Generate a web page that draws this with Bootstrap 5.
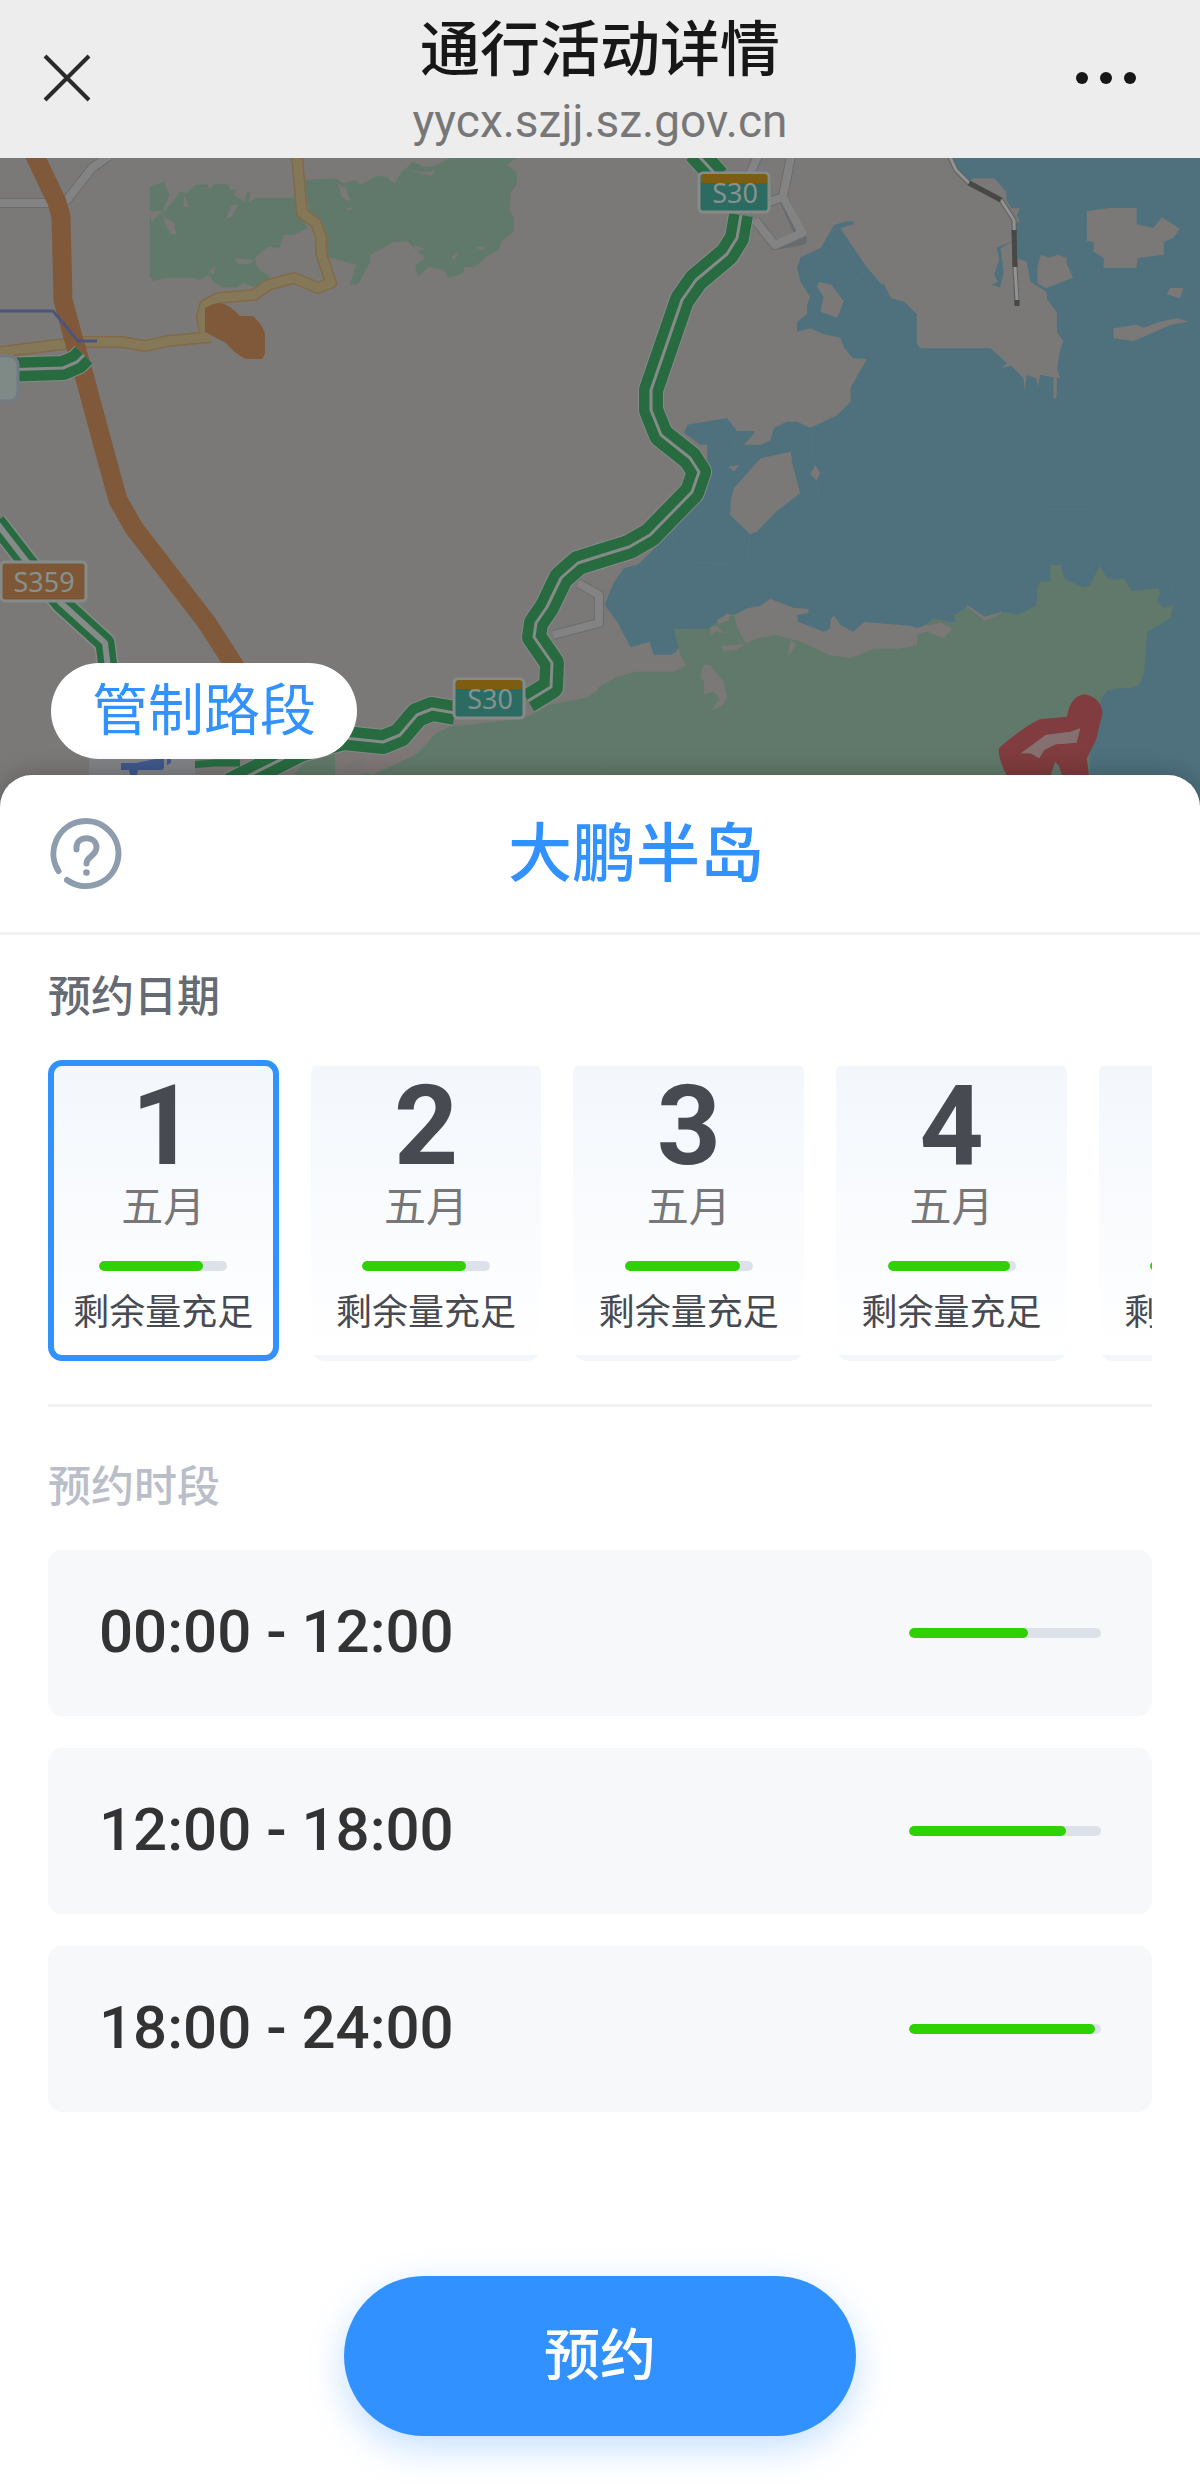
<!DOCTYPE html>
<html lang="zh-CN">
<head>
<meta charset="utf-8">
<meta name="viewport" content="width=device-width, initial-scale=1">
<title>通行活动详情</title>
<link href="https://cdn.jsdelivr.net/npm/bootstrap@5.3.0/dist/css/bootstrap.min.css" rel="stylesheet">
<style>
  :root { --brand: #3091ff; --track: #dde2ea; --fill: #2ed203; }
  body { font-family: "Noto Sans CJK SC", sans-serif; color: #333; background: #fff; }
  .topbar { background: #ededed; height: 158px; padding: 0 40px; }
  .topbar-btn { width: 56px; height: 56px; line-height: 1; }
  .topbar-title { font-size: 60px; line-height: 72px; font-weight: 500; color: #171717; }
  .topbar-url { font-family: Roboto, "Noto Sans CJK SC", sans-serif; font-size: 46px; line-height: 56px; margin-top: 12px; color: #777; }
  .map-area { height: 617px; background: #7b7977; }
  .map-area > svg { width: 100%; height: 650px; }
  .zone-tag { left: 51px; bottom: 16px; height: 96px; padding: 0 41px 10px; border-radius: 48px; font-size: 56px; line-height: 84px; color: var(--brand); }
  .sheet { border-radius: 32px 32px 0 0; box-shadow: 0 0 24px rgba(0,0,0,.25); }
  .sheet-head { height: 160px; padding: 0 50px; border-bottom: 3px solid #f2f2f2; }
  .sheet-title { font-size: 64px; line-height: 84px; padding-bottom: 12px; font-weight: 500; color: var(--brand); }
  .help-btn { width: 72px; height: 72px; }
  .sheet-body { padding: 28px 48px 48px; }
  .section-label { font-size: 43px; line-height: 60px; font-weight: 500; color: #666a73; margin-bottom: 37px; }
  .section-label.is-muted { color: #b9bec9; }
  .day-strip { gap: 32px; overflow-x: auto; scrollbar-width: none; }
  .day-strip::-webkit-scrollbar { display: none; }
  .day-card { flex: 0 0 20.9%; border: 6px solid transparent; border-radius: 14px; padding-bottom: 22px; background-image: linear-gradient(#f3f7fc, #fff); cursor: pointer; }
  .btn-check:checked + .day-card { border-color: var(--brand); }
  .day-num { font-family: Roboto, sans-serif; font-size: 112px; line-height: 120px; font-weight: 700; color: #484a52; }
  .day-month { font-size: 42px; line-height: 52px; margin-top: -8px; color: #777; }
  .day-note { font-size: 36px; line-height: 48px; color: #484a52; margin-top: 14px; }
  .quota { height: 10px; border-radius: 5px; background: var(--track); }
  .quota .progress-bar { border-radius: 5px; background: var(--fill); }
  .day-quota { width: 128px; margin-top: 31px; }
  .slot-quota { width: 192px; }
  .rule { height: 3px; background: #f2f2f2; margin: 43px 0 46px; }
  .slot-list { gap: 32px; }
  .slot { height: 166px; padding: 0 51px; border-radius: 14px; background: #f7f8fa; }
  .slot-time { font-family: Roboto, sans-serif; font-size: 60px; line-height: 80px; font-weight: 500; color: #333; padding-bottom: 2px; }
  .book-btn { width: 512px; max-width: 100%; height: 160px; border-radius: 80px; margin-top: 164px; padding-bottom: 16px; font-size: 56px; font-weight: 500; color: #fff; background: var(--brand); box-shadow: 0 12px 36px rgba(48,145,255,.28); }
  .book-btn:hover { color: #fff; background: #1f84f5; }
  .land { fill: #7b7977; } .sea { fill: #4e717d; } .wood { fill: #61796b; }
  .ln { fill: none; stroke-linejoin: round; }
  .plate { font-family: "Noto Sans", sans-serif; font-size: 27px; fill: #85928f; text-anchor: middle; }
</style>
</head>
<body>
<header class="topbar d-flex align-items-center justify-content-between">
  <button type="button" class="topbar-btn btn p-0 border-0" aria-label="关闭">
    <svg width="56" height="56" viewBox="0 0 56 56" fill="none" stroke="#2a2a2a" stroke-width="4"><path d="M5 5 49 49M49 5 5 49"/></svg>
  </button>
  <div class="text-center">
    <h1 class="topbar-title m-0">通行活动详情</h1>
    <div class="topbar-url">yycx.szjj.sz.gov.cn</div>
  </div>
  <button type="button" class="topbar-btn btn p-0 border-0" aria-label="更多">
    <svg class="overflow-visible" width="56" height="56" viewBox="0 0 56 56" fill="#171717"><circle cx="-22" cy="27" r="6"/><circle cx="2" cy="27" r="6"/><circle cx="26" cy="27" r="6"/></svg>
  </button>
</header>

<section class="map-area position-relative" aria-label="地图">
  <svg class="d-block" viewBox="0 158 1200 650" preserveAspectRatio="xMidYMin slice" role="img" aria-label="大鹏半岛地图">
    <rect class="land" y="158" width="1200" height="650"/>
    <!-- woods, north -->
    <g transform="translate(0 150) scale(.3827 .3333)">
      <path class="wood" d="M392 110 428 95 443 135 428 175 425 190 465 135 468 125 490 128 510 105 540 103 548 118 560 103 597 103 600 118 618 118 610 135 640 155 645 125 655 125 650 160 668 143 775 143 785 200 805 235 765 255 742 255 730 293 700 290 665 325 670 345 680 360 705 380 665 412 635 400 620 412 580 412 558 395 545 375 520 390 500 383 430 384 400 393 392 380ZM795 90 880 85 895 100 930 90 940 105 985 78 1010 80 1030 100 1050 65 1080 35 1110 50 1130 50 1175 24 1350 24 1325 45 1350 65V105L1335 125 1332 180 1342 200V245L1310 275 1305 297 1270 320 1240 352 1215 350 1210 370 1172 384 1160 360 1120 350 1092 382 1085 345 1110 325 1065 275H1030L1005 292 968 315V335L935 403H915L930 345 870 325 850 320V240L810 200Z"/>
      <path class="land" d="M425 197 455 220 460 255 445 250 430 215ZM605 165H622L605 200 590 208ZM392 184H425L395 215ZM480 130 494 172 480 170ZM883 100 905 115 915 155 895 145ZM903 175 928 172 912 182ZM1065 62 1110 66 1138 62 1125 78 1095 68ZM612 325 665 330 650 343 620 340ZM1180 320 1198 308 1185 333ZM1242 292 1265 288 1262 302ZM1080 285 1110 298 1090 303ZM545 365 562 348 558 375Z"/>
    </g>
    <!-- bay, upper part -->
    <g transform="translate(600 150) scale(.3827 .3333)">
      <path class="sea" d="M920 24H1570V965H280V884H262L220 848 228 824 332 804 358 843H402V852L376 884H420L445 872 455 833 488 815H515L549 833 618 797 655 755V712L698 627 662 625 638 595 628 563 585 553 549 535 515 545V515L541 493V465L549 442 524 395 515 355 524 322 577 293 612 225 640 215 662 213V223L628 235 696 350 735 403H742L760 445 795 455 828 493V583L838 595H1020L1064 640 1048 653 1075 647 1106 684 1110 720 1115 675 1140 685 1144 710 1150 675 1185 682V745H1193L1194 682 1202 685 1195 655 1202 600 1211 575 1194 545V487L1168 447 1166 425 1125 395 1115 335 1092 325 1085 220 1097 215 1090 195 1097 175H1075L1062 150V125L1030 85H975L965 95 930 50ZM1075 275 1037 292 1043 330 1030 375 1040 395 1023 405 1045 412 1055 370 1047 295Z"/>
      <path class="land" d="M572 395 605 405 637 453 620 503 576 485 584 442 568 412ZM1272 184 1330 174H1402V223L1446 234 1468 202 1515 236 1498 263 1473 275V314L1404 324 1402 354H1316V324L1290 305V275L1272 273ZM1152 314 1175 323 1195 314 1219 324 1220 343 1236 383 1166 415 1143 400V350ZM1490 414H1525L1515 445 1481 433ZM1342 535 1402 524 1420 533 1470 513 1510 505 1537 515 1490 525 1395 573 1342 565ZM498 905 508 965H392L420 925ZM335 945H365L350 965Z"/>
      <path class="ln" stroke="#58747c" stroke-width="2" d="M632 430 696 360M1228 340 1290 306M1410 335 1490 412M357 845 342 945M551 835 558 945"/>
    </g>
    <!-- bay, lower part, and the peninsula -->
    <g transform="translate(600 460) scale(.3827 .3333)">
      <path class="sea" d="M282 0H1570V1050H1200V600H300L208 570 185 584H140L130 545 80 562 45 485 12 435 35 370 62 325 100 313 130 280 185 215 215 180 265 110 280 60Z"/>
      <path class="land" d="M200 570 250 530 300 500 310 480 330 462 350 465 385 445 420 437 445 416 505 443 545 447V458L515 465 517 485 585 515 600 507 604 475 612 468 628 495 662 515 690 486 810 497 830 505 880 480 930 490 960 435 1005 470 1050 455V640H200ZM415 0H500L523 100 460 155 410 215 393 223 340 165 342 120 350 85ZM335 20 365 15 350 34ZM562 15 575 38 566 62 550 42Z"/>
      <path class="wood" d="M-5 683 40 653 90 635H192L225 615 210 585 193 507 285 506 310 480 350 465 358 500 380 550 410 535 460 525 520 543 600 585 655 594 715 566H780L828 556 830 522 855 515 897 534 921 507 890 488 850 497 870 474 928 490 925 467 960 440 1005 482 1060 455 1090 465 1140 437 1143 380 1150 365H1177V315H1204L1212 355 1262 383 1280 375 1306 318 1325 355 1350 360 1370 355 1388 394 1460 385 1463 400 1456 425 1475 443 1498 435 1490 475 1430 515 1422 638 1408 675 1388 685H1350L1325 693 1310 715 1280 850V1050H-5Z"/>
      <path class="land" d="M270 615H288L323 665 332 715 322 735 290 753 313 715 298 696 272 702 272 665 262 652ZM498 538 513 555 490 592ZM305 480 335 462 338 480 312 492ZM288 500 305 498 328 522 305 512 290 525ZM315 558 380 552 355 570 325 574Z"/>
      <path class="ln" stroke="#58747c" stroke-width="2" d="M187 225 205 270 240 305 335 312M392 223 387 300 430 415M568 65 574 145M975 153 1285 147 1380 238 1490 375 1499 410 1568 265"/>
      <path fill="#803c3e" fill-rule="evenodd" d="M1062 945Q1035 880 1044 862 1120 790 1150 778L1220 770Q1230 705 1268 703 1310 715 1313 760L1296 840 1272 895 1283 1000H1222L1200 920 1190 905 1160 1000H1080ZM1100 880 1165 825 1230 815 1255 805 1245 848 1190 853 1160 870 1148 895 1125 880Z"/>
      <path fill="#86706f" d="M1100 880 1165 825 1230 815 1255 805 1245 848 1190 853 1160 870 1148 895 1125 880Z"/>
    </g>
    <!-- woods, south-west -->
    <g transform="translate(0 460) scale(.3827 .3333)">
      <path class="wood" d="M1572 683 1535 712 1435 735 1370 775 1175 800 1140 820 1090 880 1000 930 720 1000H1572Z"/>
      <path class="wood" d="M800 900 875 880V1050H690Z"/>
      <path fill="#807876" d="M875 890 1085 870 1085 885 970 945 950 930 960 895 915 905 888 945ZM1085 850 1110 825 1160 805 1125 830 1115 852Z"/>
    </g>
    <!-- minor roads -->
    <g class="ln">
      <path stroke="#696c6e" stroke-width="10" d="M0 203H52L67 200 92 168 109 156M758 156 749 176M791 156 783 197 802 240 775 245 755 220M783 197 766 203M578 583 599 595V623L553 635"/>
      <path stroke="#838383" stroke-width="8" d="M0 203H52L67 200 92 168 109 156M758 156 749 176M791 156 783 197 802 233 775 245 755 220M783 197 766 203M578 583 599 595V623L553 635"/>
      <path stroke="#5d5f60" stroke-width="5" d="M950 157 956 170 969 183 1001 200 1014 220 1015 267 1017 305"/>
      <path stroke="#929292" stroke-width="3" d="M950 157 956 170 969 183 1001 200 1014 220 1015 267 1017 300"/>
      <path stroke="#484848" stroke-width="5" d="M969 183 1001 200M1014 230 1015 267M1017 300V306"/>
      <path stroke="#806a48" stroke-width="12" d="M297 156 302 213 316 223 321 237V253L331 283 318 288 294 278 268 285 254 295 218 298 205 305 202 317 205 333M211 337 168 341 145 346 122 342H80L0 352"/>
      <path stroke="#857859" stroke-width="9" d="M297 156 302 213 316 223 321 237V253L331 283 318 288 294 278 268 285 254 295 218 298 205 305 202 317 205 333M211 337 168 341 145 346 122 342H80L0 352"/>
    </g>
    <!-- provincial road -->
    <path class="ln" stroke="#80593a" stroke-width="19" d="M34 154 57 202 61 217 63 300 73 337 84 375 107 460 118 500 134 528 207 623 245 682"/>
    <path fill="#80593a" d="M205 308Q214 303 220 303 230 305 240 316H253Q264 326 265 335V354L262 359H246Q235 354 226 343L205 332Z"/>
    <path class="ln" stroke="#4b547c" stroke-width="3" d="M0 311H53L78 341H97"/>
    <!-- expressways -->
    <g class="ln">
      <path stroke="#858b88" stroke-width="26" d="M0 370 63 368 77 362 84 355M695 152 718 177M741 215 737 238 727 254 696 280 682 300 651 390V410L661 435 690 458 699 472 692 492 650 535 629 547 600 556 578 563 561 578 547 607 536 623 534 637 552 663 551 687 528 701M455 713 432 709 417 715 400 735 383 742 344 738 300 750 230 785"/>
      <path stroke="#286b40" stroke-width="24" d="M0 370 63 368 77 362 84 355M695 152 718 177M741 215 737 238 727 254 696 280 682 300 651 390V410L661 435 690 458 699 472 692 492 650 535 629 547 600 556 578 563 561 578 547 607 536 623 534 637 552 663 551 687 528 701M455 713 432 709 417 715 400 735 383 742 344 738 300 750 230 785"/>
      <path stroke="#858b88" stroke-width="3" d="M0 370 63 368 77 362 84 355M695 152 718 177M741 215 737 238 727 254 696 280 682 300 651 390V410L661 435 690 458 699 472 692 492 650 535 629 547 600 556 578 563 561 578 547 607 536 623 534 637 552 663 551 687 528 701M455 713 432 709 417 715 400 735 383 742 344 738 300 750 230 785"/>
      <path stroke="#286b40" stroke-width="7" d="M190 765 215 763 240 763"/>
      <path stroke="#858b88" stroke-width="22" d="M-4 522 27 562 61 603 105 643 108 668"/>
      <path stroke="#286b40" stroke-width="19" d="M-4 522 27 562 61 603 105 643 108 668"/>
      <path stroke="#858b88" stroke-width="6" d="M-4 522 27 562 61 603 105 643 108 668"/>
    </g>
    <!-- road number plates -->
    <g stroke="#858b88" stroke-width="3">
      <rect x="-20" y="356" width="38" height="45" rx="9" fill="#7f8a86" stroke="#707b84"/>
      <rect x="699" y="173" width="70" height="39" rx="4" fill="#2c6b61"/>
      <rect x="454" y="679" width="70" height="39" rx="4" fill="#2c6b61"/>
      <rect x="1" y="562" width="85" height="39" rx="4" fill="#7e5836"/>
    </g>
    <path fill="#7f5d10" d="M701 183V177Q701 174 704 174H764Q767 174 767 177V183ZM456 689V683Q456 680 459 680H519Q522 680 522 683V689Z"/>
    <text class="plate" x="735" y="203">S30</text>
    <text class="plate" x="490" y="709">S30</text>
    <text class="plate" x="44" y="592">S359</text>
    <!-- station marker -->
    <path fill="#818387" d="M89 740H195V808H89Z"/>
    <path fill="#3f588c" d="M121 763H136L155 759H164V768L162 770H138L136 778H131L129 770H121ZM167 757H171V763L167 765Z"/>
  </svg>
  <button type="button" class="zone-tag btn bg-white border-0 position-absolute">管制路段</button>
</section>

<main class="sheet bg-white position-relative">
  <div class="sheet-head d-flex align-items-center">
    <button type="button" class="help-btn btn p-0 border-0 flex-shrink-0" aria-label="帮助">
      <svg class="d-block" width="72" height="72" viewBox="0 0 72 72" fill="none" stroke="#8e9dae" stroke-width="6" stroke-linecap="round"><path d="M8.500 53A32.500 32.500 0 1 1 17 62"/><path d="M26.500 31.500V29.500C26.500 17 46.500 17 46.500 29.500 46.500 38 36.500 38 36.500 45.500"/><circle cx="36.500" cy="54.500" r="3.300" fill="#8e9dae" stroke="none"/></svg>
    </button>
    <h2 class="sheet-title flex-fill text-center m-0">大鹏半岛</h2>
  </div>

  <div class="sheet-body">
    <h3 class="section-label mt-0">预约日期</h3>
    <div class="day-strip d-flex" role="radiogroup" aria-label="预约日期">
      <input class="btn-check" type="radio" name="day" id="day1" checked>
      <label class="day-card d-flex flex-column align-items-center" for="day1">
        <span class="day-num">1</span><span class="day-month">五月</span>
        <span class="progress quota day-quota"><span class="progress-bar" style="width:81%"></span></span>
        <span class="day-note text-nowrap">剩余量充足</span>
      </label>
      <input class="btn-check" type="radio" name="day" id="day2">
      <label class="day-card d-flex flex-column align-items-center" for="day2">
        <span class="day-num">2</span><span class="day-month">五月</span>
        <span class="progress quota day-quota"><span class="progress-bar" style="width:81%"></span></span>
        <span class="day-note text-nowrap">剩余量充足</span>
      </label>
      <input class="btn-check" type="radio" name="day" id="day3">
      <label class="day-card d-flex flex-column align-items-center" for="day3">
        <span class="day-num">3</span><span class="day-month">五月</span>
        <span class="progress quota day-quota"><span class="progress-bar" style="width:90%"></span></span>
        <span class="day-note text-nowrap">剩余量充足</span>
      </label>
      <input class="btn-check" type="radio" name="day" id="day4">
      <label class="day-card d-flex flex-column align-items-center" for="day4">
        <span class="day-num">4</span><span class="day-month">五月</span>
        <span class="progress quota day-quota"><span class="progress-bar" style="width:96%"></span></span>
        <span class="day-note text-nowrap">剩余量充足</span>
      </label>
      <input class="btn-check" type="radio" name="day" id="day5">
      <label class="day-card d-flex flex-column align-items-center" for="day5">
        <span class="day-num">5</span><span class="day-month">五月</span>
        <span class="progress quota day-quota"><span class="progress-bar" style="width:96%"></span></span>
        <span class="day-note text-nowrap">剩余量充足</span>
      </label>
    </div>

    <div class="rule"></div>

    <h3 class="section-label is-muted mt-0">预约时段</h3>
    <div class="slot-list d-flex flex-column">
      <button type="button" class="slot btn border-0 d-flex align-items-center justify-content-between">
        <span class="slot-time">00:00 - 12:00</span>
        <span class="progress quota slot-quota"><span class="progress-bar" style="width:62%"></span></span>
      </button>
      <button type="button" class="slot btn border-0 d-flex align-items-center justify-content-between">
        <span class="slot-time">12:00 - 18:00</span>
        <span class="progress quota slot-quota"><span class="progress-bar" style="width:82%"></span></span>
      </button>
      <button type="button" class="slot btn border-0 d-flex align-items-center justify-content-between">
        <span class="slot-time">18:00 - 24:00</span>
        <span class="progress quota slot-quota"><span class="progress-bar" style="width:97%"></span></span>
      </button>
    </div>

    <div class="text-center">
      <button type="button" class="book-btn btn border-0">预约</button>
    </div>
  </div>
</main>
<script src="https://cdn.jsdelivr.net/npm/bootstrap@5.3.0/dist/js/bootstrap.bundle.min.js"></script>
</body>
</html>
